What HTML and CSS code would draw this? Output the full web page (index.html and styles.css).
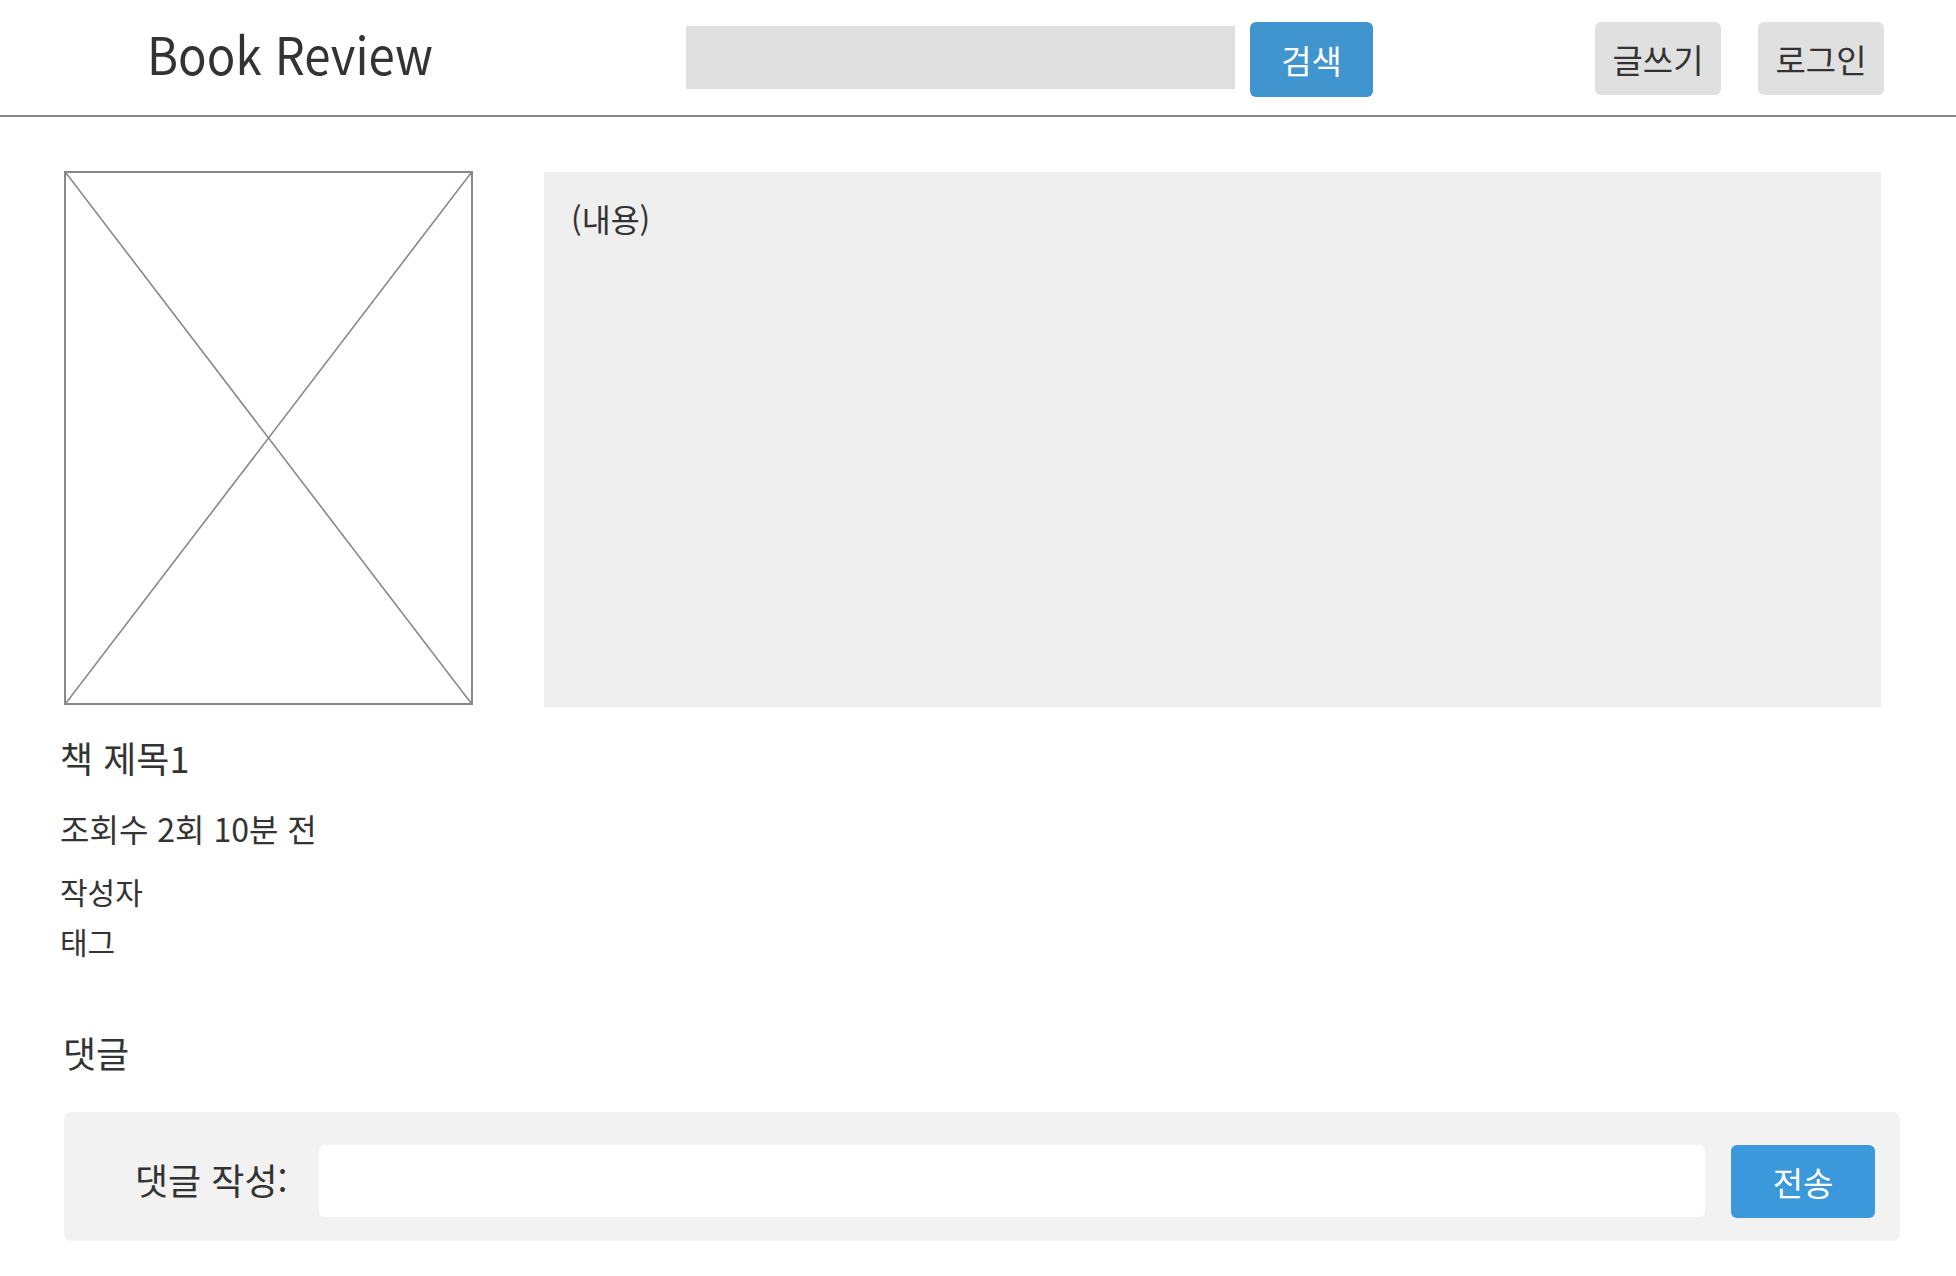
FILE: index.html
```html
<!DOCTYPE html>
<html lang="ko">
<head>
<meta charset="utf-8">
<title>Book Review</title>
<link rel="stylesheet" href="styles.css">
</head>
<body>
<header class="header">
  <div class="logo"><span class="logo-text">Book Review</span></div>
  <form class="search">
    <input class="search-input" type="text">
    <button class="btn btn-blue search-btn" type="button">검색</button>
  </form>
  <nav class="nav">
    <button class="btn btn-gray" type="button">글쓰기</button>
    <button class="btn btn-gray" type="button">로그인</button>
  </nav>
</header>
<main class="main">
  <section class="post">
    <div class="cover">
      <svg class="cover-x" viewBox="0 0 100 100" preserveAspectRatio="none">
        <line x1="0" y1="0" x2="100" y2="100" vector-effect="non-scaling-stroke"/>
        <line x1="100" y1="0" x2="0" y2="100" vector-effect="non-scaling-stroke"/>
      </svg>
    </div>
    <div class="content">(내용)</div>
  </section>
  <section class="info">
    <h2 class="title">책 제목1</h2>
    <p class="meta">조회수 2회 10분 전</p>
    <p class="small author">작성자</p>
    <p class="small">태그</p>
  </section>
  <section class="comments">
    <h3 class="comments-title">댓글</h3>
    <form class="comment-form">
      <label class="comment-label">댓글 작성:</label>
      <input class="comment-input" type="text">
      <button class="btn btn-send" type="button">전송</button>
    </form>
  </section>
</main>
</body>
</html>
```
FILE: styles.css
```css
* { box-sizing: border-box; }
body {
  margin: 0;
  font-family: "Noto Sans CJK KR", "Noto Sans", sans-serif;
  color: #333;
  background: #fff;
}
.header {
  height: 117px;
  border-bottom: 2px solid #888;
  display: flex;
  align-items: center;
  padding-left: 147px;
  padding-right: 72px;
}
.logo {
  font-size: 52px;
  color: #333;
  width: 539px;
  line-height: 1;
  margin-top: -9px;
}
.logo-text {
  display: inline-block;
  transform: scaleX(0.91);
  transform-origin: left center;
}
.search {
  display: flex;
  align-items: center;
  margin: 0;
}
.search-input {
  width: 549px;
  height: 63px;
  border: none;
  background: #e0e0e0;
  margin: 0 15px 0 0;
  padding: 0;
}
.btn {
  font-family: inherit;
  border: none;
  border-radius: 6px;
  font-size: 33px;
  cursor: pointer;
  padding: 0;
}
.btn-blue {
  background: #4195cf;
  color: #fff;
}
.search-btn {
  width: 123px;
  height: 75px;
  margin-top: 4px;
}
.nav {
  margin-left: auto;
  display: flex;
  gap: 37px;
}
.btn-gray {
  background: #e0e0e0;
  color: #333;
  width: 126px;
  height: 73px;
  margin-top: 2px;
}
.main {
  padding: 54px 56px 0 64px;
}
.post {
  display: flex;
  gap: 71px;
  align-items: flex-start;
}
.cover {
  width: 409px;
  height: 534px;
  border: 2px solid #888;
  flex: none;
}
.cover-x {
  display: block;
  width: 100%;
  height: 100%;
}
.cover-x line {
  stroke: #888;
  stroke-width: 1.6;
}
.content {
  width: 1337px;
  height: 535px;
  margin-top: 1px;
  background: #efefef;
  padding: 24px 27px;
  font-size: 31.5px;
  line-height: 1.45;
}
.info {
  margin-left: -4px;
}
.title {
  font-weight: normal;
  font-size: 36px;
  margin: 28px 0 0;
  line-height: 44px;
}
.meta {
  font-size: 32px;
  margin: 29px 0 0;
  line-height: 40px;
}
.small {
  font-size: 30px;
  margin: 0;
  line-height: 50px;
}
.small.author { margin-top: 18px; }
.comments-title {
  font-weight: normal;
  font-size: 36px;
  margin: 61px 0 0 -1px;
  line-height: 50px;
}
.comment-form {
  margin-top: 35px;
  background: #f2f2f2;
  border-radius: 7px;
  width: 1836px;
  height: 129px;
  display: flex;
  align-items: flex-start;
  padding: 33px 25px 0 71px;
}
.comment-label {
  font-size: 36px;
  line-height: 68px;
  width: 184px;
  flex: none;
}
.comment-input {
  width: 1386px;
  height: 72px;
  border: none;
  border-radius: 6px;
  background: #fff;
  padding: 0;
  margin-right: 26px;
}
.btn-send {
  width: 144px;
  height: 73px;
  background: #3a98db;
  color: #fff;
}
```
